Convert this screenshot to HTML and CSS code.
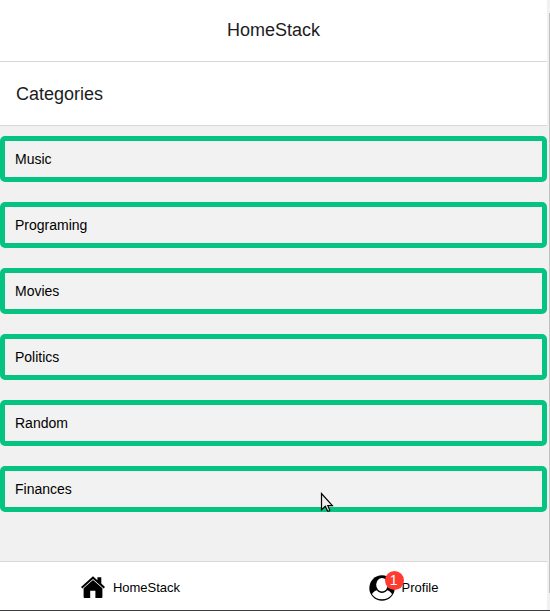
FILE: index.html
```html
<!DOCTYPE html>
<html lang="en">
<head>
<meta charset="utf-8">
<title>HomeStack</title>
<link rel="stylesheet" href="styles.css">
</head>
<body>
<div class="window">
  <div class="app">
    <header class="bar title">HomeStack</header>
    <h1 class="bar heading">Categories</h1>
    <main class="list">
      <div class="category">Music</div>
      <div class="category">Programing</div>
      <div class="category">Movies</div>
      <div class="category">Politics</div>
      <div class="category">Random</div>
      <div class="category">Finances</div>
    </main>
    <nav class="tabs">
      <a class="tab">
        <svg class="home-icon" width="24" height="23" viewBox="0 0 24 23">
          <path d="M12 .3 0 11l1.300 1.500L12 2.900l10.700 9.600L24 11l-3.700-3.400V1.200h-3.900v3z"/>
          <path d="M12 3.900 2.600 12.300V21q0 1 1 1H9.200v-7.200h5.200V22h6q1 0 1-1v-8.700z"/>
        </svg>
        <span>HomeStack</span>
      </a>
      <a class="tab tab-profile">
        <span class="avatar">
          <svg width="26" height="26" viewBox="0 0 26 26">
            <circle cx="13" cy="13" r="12.700"/>
            <path class="person" d="M7.800 15.300C5 16.300 3.300 18 3 19.200 5 22.300 8.700 24.200 13 24.200s8-1.900 10-5c-.3-1.200-2-2.900-4.800-3.900-1.500 1.700-3.300 2.600-5.200 2.600s-3.700-.9-5.200-2.600z"/>
            <ellipse class="person" cx="13" cy="9.700" rx="5.800" ry="6.800"/>
          </svg>
          <span class="badge">1</span>
        </span>
        <span>Profile</span>
      </a>
    </nav>
  </div>
  <div class="scrollbar"><div class="thumb"></div></div>
  <svg class="cursor" width="14" height="21" viewBox="0 0 14 21">
    <path d="M1.500 1.500v16.300l3.800-3.600 2.300 4.800q1.400.5 2.200-.8l-2-4.500h4.600z"/>
  </svg>
</div>
</body>
</html>
```
FILE: styles.css
```css
* {
  box-sizing: border-box;
}

body {
  margin: 0;
  overflow: hidden;
  font-family: "Liberation Sans", Arial, sans-serif;
  color: #000;
}

.window {
  position: relative;
  display: flex;
  height: 611px;
  background: #f1f1f1;
  border-bottom: 1px solid #3b3b3d;
}

.app {
  display: flex;
  flex-direction: column;
  width: 547px;
  background: #f1f1f1;
}

.bar {
  display: flex;
  align-items: center;
  flex: none;
  margin: 0;
  padding: 0 16px;
  background: #fff;
  border-bottom: 1px solid #d8d8d8;
  font-size: 18px;
  font-weight: 400;
  color: #1c1c1e;
}

.title {
  justify-content: center;
  height: 62px;
  padding-bottom: 1px;
}

.heading {
  height: 64px;
  padding-top: 2px;
}

.list {
  display: flex;
  flex: 1;
  flex-direction: column;
  gap: 20px;
  padding-top: 10px;
}

.category {
  height: 46px;
  padding: 0 10px;
  border: 5px solid #05c481;
  border-radius: 5px;
  background: #f2f2f2;
  font-size: 14px;
  line-height: 36px;
}

.tabs {
  display: flex;
  height: 49px;
  background: #fff;
  border-top: 1px solid #d8d8d8;
}

.tab {
  display: flex;
  flex: 1;
  align-items: center;
  justify-content: center;
  padding: 3px 12px 0 0;
  font-size: 13px;
}

.tab-profile {
  padding-right: 13px;
}

.home-icon {
  margin-right: 8px;
}

.avatar {
  position: relative;
  height: 26px;
  margin-right: 7px;
}

.person {
  fill: #fff;
}

.badge {
  position: absolute;
  top: -4px;
  left: 16px;
  width: 19px;
  height: 19px;
  padding-right: 1px;
  border-radius: 50%;
  background: #ff3b30;
  color: #fff;
  font-size: 14px;
  line-height: 18px;
  text-align: center;
}

.scrollbar {
  width: 3px;
  padding: 13px 0 17px 2px;
}

.thumb {
  height: 100%;
  background: #c1c1c1;
}

.cursor {
  position: absolute;
  top: 492px;
  left: 320px;
  fill: #eee;
  stroke: #000;
  stroke-width: 1.2;
}
```
